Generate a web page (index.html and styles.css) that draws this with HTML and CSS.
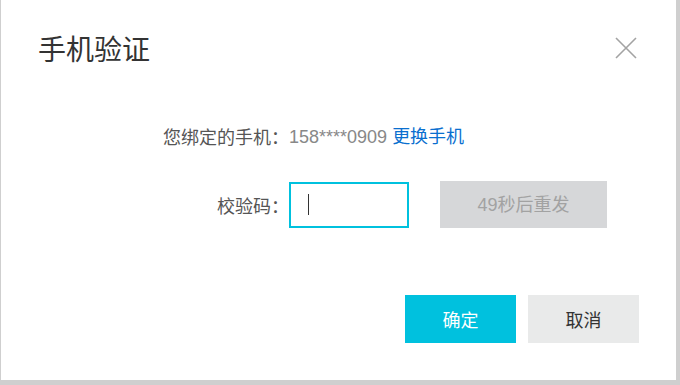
FILE: index.html
```html
<!DOCTYPE html>
<html lang="zh-CN">
<head>
<meta charset="utf-8">
<title>手机验证</title>
<link rel="stylesheet" href="styles.css">
</head>
<body>
<div class="dialog">
  <div class="dialog-header">
    <h2 class="dialog-title">手机验证</h2>
    <button class="close-btn" aria-label="关闭">
      <svg width="22" height="22" viewBox="0 0 22 22"><path d="M1 1 L21 21 M21 1 L1 21" stroke="#a3a3a3" stroke-width="1.6" fill="none"/></svg>
    </button>
  </div>
  <div class="form">
    <div class="row row-phone">
      <span class="label">您绑定的手机：</span>
      <span class="value"><span class="phone">158****0909</span> <a class="link" href="#">更换手机</a></span>
    </div>
    <div class="row row-code">
      <span class="label">校验码：</span>
      <span class="value code-value">
        <span class="input"><span class="caret"></span></span>
        <span class="resend">49秒后重发</span>
      </span>
    </div>
  </div>
  <div class="footer">
    <button class="btn btn-primary">确定</button>
    <button class="btn btn-default">取消</button>
  </div>
</div>
</body>
</html>
```
FILE: styles.css
```css
html, body {
  margin: 0;
  padding: 0;
}
body {
  background: #cfcfcf;
  width: 680px;
  height: 385px;
  overflow: hidden;
  font-family: "Liberation Sans", "Noto Sans CJK SC", sans-serif;
}
.dialog {
  margin-left: 1px;
  width: 675px;
  height: 380px;
  background: #ffffff;
  box-sizing: border-box;
  display: flex;
  flex-direction: column;
}
.dialog-header {
  display: flex;
  justify-content: space-between;
  align-items: center;
  padding: 32px 39px 0 37px;
  height: 32px;
}
.dialog-title {
  margin: 0;
  font-weight: normal;
  font-size: 28px;
  line-height: 32px;
  color: #333333;
  font-family: "Noto Sans CJK SC", sans-serif;
}
.close-btn {
  border: 0;
  background: none;
  padding: 0;
  width: 22px;
  height: 22px;
  display: block;
}
.close-btn svg { display: block; }
.form {
  display: grid;
  grid-template-columns: 288px auto;
  column-gap: 0;
  row-gap: 32px;
  margin-top: 59px;
  align-items: center;
}
.row {
  display: contents;
}
.label {
  text-align: right;
  font-size: 18px;
  line-height: 24px;
  color: #555555;
  font-family: "Noto Sans CJK SC", sans-serif;
}
.value {
  font-size: 18px;
  line-height: 24px;
}
.phone {
  color: #888888;
}
.link {
  color: #0a6fcf;
  text-decoration: none;
  font-family: "Noto Sans CJK SC", sans-serif;
}
.code-value {
  display: flex;
  align-items: center;
  gap: 31px;
}
.input {
  box-sizing: border-box;
  width: 120px;
  height: 46px;
  border: 2px solid #00c1de;
  display: flex;
  align-items: center;
  padding-left: 17px;
}
.caret {
  width: 1px;
  height: 21px;
  background: #333333;
}
.resend {
  width: 167px;
  height: 47px;
  background: #d6d7d9;
  color: #a2a2a2;
  font-size: 18px;
  display: flex;
  align-items: center;
  justify-content: center;
}
.footer {
  display: flex;
  justify-content: flex-end;
  gap: 12px;
  padding-right: 37px;
  margin-top: 67px;
}
.btn {
  width: 111px;
  height: 48px;
  border: 0;
  font-size: 18px;
  font-family: "Noto Sans CJK SC", sans-serif;
  padding: 0;
}
.btn-primary {
  background: #00c1de;
  color: #ffffff;
}
.btn-default {
  background: #e9eaea;
  color: #333333;
}
```
